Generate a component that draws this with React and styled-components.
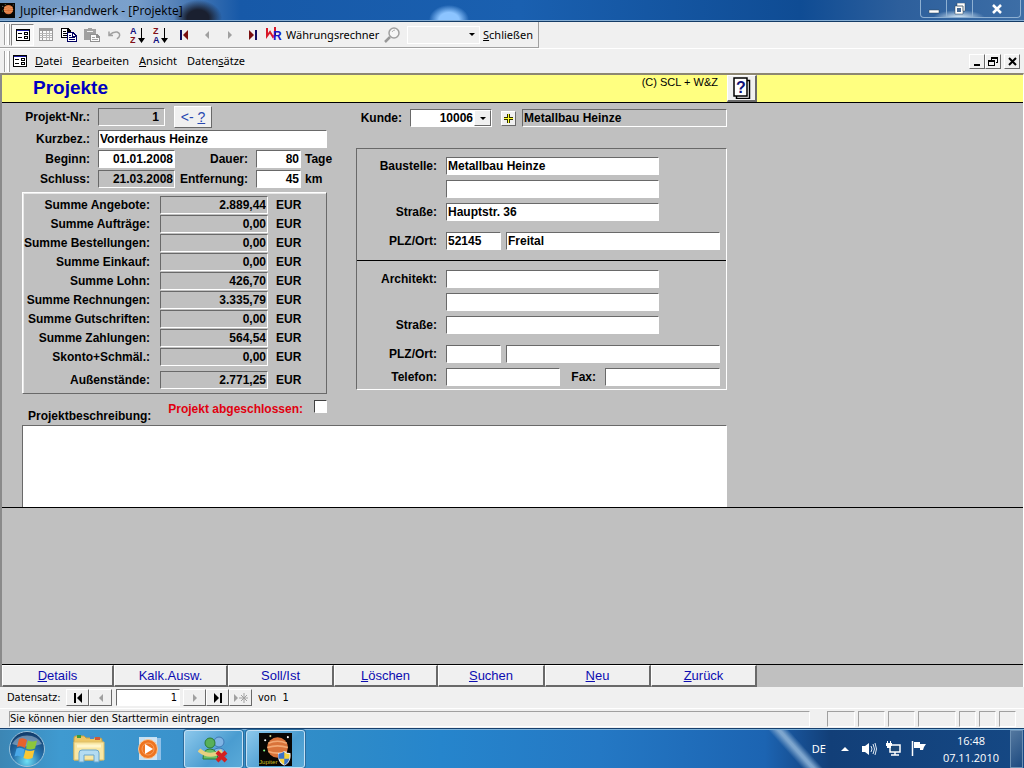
import styled, { createGlobalStyle, css } from 'styled-components'
import { useState } from 'react'

const SUMS = [
  ['Summe Angebote:', '2.889,44'],
  ['Summe Aufträge:', '0,00'],
  ['Summe Bestellungen:', '0,00'],
  ['Summe Einkauf:', '0,00'],
  ['Summe Lohn:', '426,70'],
  ['Summe Rechnungen:', '3.335,79'],
  ['Summe Gutschriften:', '0,00'],
  ['Summe Zahlungen:', '564,54'],
  ['Skonto+Schmäl.:', '0,00'],
  ['Außenstände:', '2.771,25'],
]

const ACTIONS = [
  ['D', 'etails'],
  ['', 'Kalk.Ausw.'],
  ['', 'Soll/Ist'],
  ['L', 'öschen'],
  ['S', 'uchen'],
  ['N', 'eu'],
  ['Z', 'urück'],
]

const STATUS_CELLS = [28, 27, 27, 38, 17, 17, 17]

/* ---------- icons ---------- */

const JupiterIcon = ({ size, label }) => (
  <svg width={size} height={size} viewBox="0 0 32 32">
    <rect width="32" height="32" fill="#080604" />
    <circle cx="18" cy="14" r="10" fill="#d9733a" />
    <path d="M9 10q9-4 18 0M8 14q10-3 20 0M9 18q9 3 18 0" stroke="#f2a873" strokeWidth="1.500" fill="none" />
    <circle cx="6" cy="7" r="1" fill="#fff" />
    <circle cx="5" cy="17" r="1" fill="#8f8" />
    <circle cx="28" cy="4" r="1" fill="#fff" />
    <circle cx="11" cy="3" r="1" fill="#cc8" />
    {label && (
      <>
        <text x="0" y="30" fontSize="6" fontFamily="Liberation Sans" fill="#c8c020">Jupiter</text>
        <path d="M19 20q3 0 5.500-2q2.500 2 5.500 2q1 8-5.500 11q-6.500-3-5.500-11z" fill="#f5d33c" stroke="#e8eef5" />
        <path d="M24.500 18v7h-5.500q-.5-2.500 0-5q3 0 5.500-2zM24.500 25h5q-1 4-5 6z" fill="#3b73c8" />
      </>
    )}
  </svg>
)

const FormIcon = () => (
  <svg width="14" height="12" viewBox="0 0 14 12" shapeRendering="crispEdges">
    <rect width="14" height="12" fill="#000" />
    <rect x="1" y="1" width="12" height="1" fill="#1a1aa0" />
    <rect x="1" y="2" width="12" height="9" fill="#fff" />
    <path d="M2 4h4v1H2zM2 8h4v1H2zM8 3h4v3H8zM8 7h4v3H8z" fill="#000" />
    <path d="M9 4h2v1H9zM9 8h2v1H9z" fill="#fff" />
  </svg>
)

const SheetIcon = () => (
  <svg width="14" height="13" viewBox="0 0 14 13" shapeRendering="crispEdges">
    <rect x="0" y="0" width="14" height="13" fill="#9a9a9a" />
    <path d="M1 3h2v9H1zM4 3h9v9H4z" fill="#fafafa" />
    <path d="M1 5h12v1H1zM1 7h12v1H1zM1 9h12v1H1zM7 3h1v9H7zM10 3h1v9h-1z" fill="#b8b8b8" />
  </svg>
)

const CopyIcon = () => (
  <svg width="16" height="14" viewBox="0 0 16 14" shapeRendering="crispEdges">
    <path d="M0 0h7l3 3v7H0z" fill="#000" />
    <path d="M1 1h5v3h3v5H1z" fill="#fff" />
    <path d="M2 3h3v1H2zM2 5h4v1H2zM2 7h4v1H2z" fill="#000" />
    <path d="M6 4h6l4 4v6H6z" fill="#000060" />
    <path d="M7 5h4v4h4v4H7zM12 6h1v1h1v1h-2z" fill="#fff" />
    <path d="M8 7h2v1H8zM8 9h6v1H8zM8 11h6v1H8z" fill="#000060" />
  </svg>
)

const PasteIcon = () => (
  <svg width="16" height="14" viewBox="0 0 16 14" shapeRendering="crispEdges">
    <path d="M0 1h4V0h4v1h4v11H0z" fill="#a0a0a0" />
    <path d="M3 3h6v1H3z" fill="#f0f0f0" />
    <path d="M6 6h7l3 3v5H6z" fill="#909090" />
    <path d="M7 7h5v3h3v3H7z" fill="#fafafa" />
    <path d="M8 9h3v1H8zM8 11h6v1H8z" fill="#a0a0a0" />
  </svg>
)

const UndoIcon = () => (
  <svg width="13" height="10" viewBox="0 0 13 10">
    <path d="M1 1.500v4h4M1.500 5Q5 1.500 9 2q4 1.500 2 5l-2 2" fill="none" stroke="#a0a0a0" strokeWidth="1.500" />
  </svg>
)

const SortIcon = ({ top, bottom, topColor, bottomColor }) => (
  <svg width="16" height="18" viewBox="0 0 16 18">
    <text x="0" y="8" fontSize="9" fontWeight="700" fontFamily="Liberation Sans" fill={topColor}>{top}</text>
    <text x="0" y="17" fontSize="9" fontWeight="700" fontFamily="Liberation Sans" fill={bottomColor}>{bottom}</text>
    <path d="M11 2h1v10h3l-3.500 5L8 12h3z" fill="#000" />
  </svg>
)

// dir: -1 points left, 1 points right
const StepIcon = ({ dir = 1, bar, star, fill, barFill }) => (
  <svg width="14" height="10" viewBox="0 0 14 10" style={{ transform: `scaleX(${dir})` }}>
    <path d={star ? 'M0 1v8l4-4z' : bar ? 'M3 0v10l5-5z' : 'M5 1v8l4-4z'} fill={fill} />
    {bar && <rect x="9" y="0" width="2" height="10" fill={barFill || fill} />}
    {star && <path d="M10 0v10M5 5h9M7 2l6 6M13 2l-6 6" stroke={fill} />}
  </svg>
)

const CurrencyIcon = () => (
  <svg width="18" height="17" viewBox="0 0 18 17">
    <path d="M1 2v8l3-4 3 5 2-2V1" fill="none" stroke="#d81828" strokeWidth="2" />
    <text x="7" y="14" fontSize="12" fontWeight="700" fontFamily="Liberation Sans" fill="#1414c8">R</text>
  </svg>
)

const LoupeIcon = () => (
  <svg width="17" height="16" viewBox="0 0 17 16">
    <circle cx="10" cy="6" r="5" fill="#f6f6f6" stroke="#a0a0a0" strokeWidth="1.500" />
    <path d="M6 10l-5 5" stroke="#989898" strokeWidth="2.500" />
    <path d="M8 5q1-2 3-2" stroke="#b0b0b0" fill="none" />
  </svg>
)

const HelpIcon = () => (
  <svg width="18" height="22" viewBox="0 0 18 22">
    <path d="M3.500 3.500h13v18h-13z" fill="#fff" stroke="#000" strokeWidth="1.500" />
    <path d="M1 1h13v18H1z" fill="#fff" stroke="#000" strokeWidth="1.500" />
    <text x="3" y="16" fontSize="16" fontWeight="700" fontFamily="Liberation Sans" fill="#101078">?</text>
  </svg>
)

const PlusIcon = () => (
  <svg width="11" height="11" viewBox="0 0 11 11" shapeRendering="crispEdges">
    <path d="M4 1h3v9H4zM1 4h9v3H1z" fill="#ffff30" />
    <path d="M4 1h1v4H1V4h3zM6 1h1v3h3v1H6zM1 6h4v4H4V7H1zM6 6h4v1H7v3H6z" fill="#303000" />
  </svg>
)

const MinIcon = () => <svg width="9" height="9"><path d="M1 7h6v2H1z" fill="#000" /></svg>
const RestoreIcon = () => (
  <svg width="10" height="9" viewBox="0 0 10 9" shapeRendering="crispEdges">
    <path d="M3 0h7v6H8V5h1V2H4v1H3zM0 3h7v6H0zM1 5v3h5V5z" fill="#000" fillRule="evenodd" />
  </svg>
)
const CloseIcon = () => <svg width="9" height="9"><path d="M1 1l7 7M8 1L1 8" stroke="#000" strokeWidth="2" /></svg>

const WhiteMin = () => <svg width="12" height="12"><path d="M1 7h10v3H1z" fill="#fff" stroke="#345" strokeWidth=".5" /></svg>
const WhiteRestore = () => (
  <svg width="12" height="12" viewBox="0 0 12 12">
    <path d="M3 0h8v8H9v3H1V3h2z" fill="#fff" stroke="#345" strokeWidth=".5" />
    <path d="M3 5h4v4H3z" fill="#456a96" />
    <path d="M3 3h6v5" fill="none" stroke="#567" />
  </svg>
)
const WhiteClose = () => <svg width="12" height="12"><path d="M2 2l8 8M10 2l-8 8" stroke="#fff" strokeWidth="2.500" /></svg>

const StartOrb = () => (
  <svg width="38" height="38" viewBox="0 0 38 38">
    <defs>
      <radialGradient id="orb" cx=".5" cy=".85" r=".8">
        <stop offset="0" stopColor="#6fe0f5" />
        <stop offset=".5" stopColor="#2672ad" />
        <stop offset="1" stopColor="#123d6c" />
      </radialGradient>
    </defs>
    <circle cx="19" cy="19" r="17.500" fill="url(#orb)" stroke="#9cc4dc" />
    <path d="M4 14a16 13 0 0 1 30 0q-15 5-30 0z" fill="#fff" opacity=".35" />
    <path d="M11 9q4-2 8 1l-2 8q-4-3-8-1z" fill="#e8622c" />
    <path d="M20 10.500q4 2 9 0l-2 8q-5 2-9 0z" fill="#8cc63c" />
    <path d="M8.500 18.500q4-2 8 1l-2 8q-4-3-8-1z" fill="#4aa8e8" />
    <path d="M17.500 20q4 2 9 0l-2 8q-5 2-9 0z" fill="#fbc834" />
  </svg>
)

const ExplorerIcon = () => (
  <svg width="32" height="30" viewBox="0 0 32 30">
    <path d="M1 4q0-2 2-2h8l2 2h14q2 0 2 2v20H1z" fill="#ecc766" stroke="#c9a040" />
    <path d="M4 1h4v3H4z" fill="#3a9a3a" /><path d="M17 2h4v3h-4z" fill="#4a8ad0" /><path d="M22 3h5v3h-5z" fill="#d05a3a" />
    <path d="M1 8h30v18H1z" fill="#f9e7a4" stroke="#dfbf66" />
    <path d="M4 12h24" stroke="#fff6cc" strokeWidth="3" />
    <path d="M6 28V19q0-3 3-3h14q3 0 3 3v9h-5v-7H11v7z" fill="#b4dcf2" stroke="#6aa6cc" />
  </svg>
)

const PlayerIcon = () => (
  <svg width="26" height="26" viewBox="0 0 26 26">
    <path d="M8 2h16v22H8z" fill="#8fc0e8" /><path d="M2 1h18v23H2z" fill="#d5e8f6" opacity=".9" />
    <circle cx="11" cy="13" r="9.500" fill="#ee7420" stroke="#f8c898" />
    <circle cx="11" cy="13" r="6" fill="none" stroke="#f8a060" />
    <path d="M8 8v10l8-5z" fill="#fff" />
  </svg>
)

const MessengerIcon = () => (
  <svg width="32" height="28" viewBox="0 0 32 28">
    <circle cx="21" cy="7" r="5" fill="#7fb4e4" stroke="#3f78b4" />
    <path d="M14 22q0-9 7-9t7 9z" fill="#7fb4e4" stroke="#3f78b4" />
    <circle cx="12" cy="8" r="5" fill="#58b058" stroke="#2c7c34" />
    <path d="M5 24q0-10 7-10t8 10z" fill="#6cc068" stroke="#2c7c34" />
    <path d="M1 15q10 9 23 1" fill="none" stroke="#e8d080" strokeWidth="4" />
    <path d="M19 17l9 9M28 17l-9 9" stroke="#d42020" strokeWidth="4" />
  </svg>
)

const SpeakerIcon = () => (
  <svg width="16" height="14" viewBox="0 0 16 14">
    <path d="M1 4h3l4-3v12l-4-3H1z" fill="#fff" />
    <path d="M10 4q2 3 0 6M12 2q3 5 0 10M14 1q3 6 0 12" fill="none" stroke="#e0eaf4" />
  </svg>
)
const NetworkIcon = () => (
  <svg width="16" height="15" viewBox="0 0 16 15">
    <path d="M4 4h10v7H4z" fill="#1b4675" stroke="#fff" strokeWidth="1.500" />
    <path d="M9 11v3M5 14h8" stroke="#fff" strokeWidth="1.500" />
    <path d="M0 2h6v3H5v2H1V5H0zM1 0h1v2H1zM4 0h1v2H4z" fill="#fff" />
  </svg>
)
const FlagIcon = () => (
  <svg width="15" height="15" viewBox="0 0 15 15">
    <path d="M1.500 0v15" stroke="#fff" strokeWidth="1.500" />
    <path d="M3 1h6v2h6l-2 3-1 3H9V7H3z" fill="#fff" />
  </svg>
)

/* ---------- page ---------- */

const Field = ({ label, id, value = '', ...rest }) => {
  const [text, setText] = useState(value)
  return (
    <>
      {label && <Label htmlFor={id} $w={rest.$label}>{label}</Label>}
      <TextBox id={id} value={text} onChange={(e) => setText(e.target.value)} {...rest} />
    </>
  )
}

export default function App() {
  return (
    <Window>
      <GlobalStyle />
      <TitleBar>
        <JupiterIcon size={15} />
        <span>Jupiter-Handwerk - [Projekte]</span>
        <Caption>
          <button aria-label="Minimieren"><WhiteMin /></button>
          <button aria-label="Wiederherstellen"><WhiteRestore /></button>
          <button aria-label="Schließen"><WhiteClose /></button>
        </Caption>
      </TitleBar>

      <Toolbar>
        <Grip />
        <ToolButton $on aria-label="Formularansicht"><FormIcon /></ToolButton>
        <ToolButton aria-label="Datenblatt"><SheetIcon /></ToolButton>
        <ToolButton aria-label="Kopieren"><CopyIcon /></ToolButton>
        <ToolButton aria-label="Einfügen"><PasteIcon /></ToolButton>
        <ToolButton aria-label="Rückgängig"><UndoIcon /></ToolButton>
        <ToolButton aria-label="Aufsteigend"><SortIcon top="A" bottom="Z" topColor="#101080" bottomColor="#801018" /></ToolButton>
        <ToolButton aria-label="Absteigend"><SortIcon top="Z" bottom="A" topColor="#801018" bottomColor="#101080" /></ToolButton>
        <ToolButton aria-label="Erster"><StepIcon dir={-1} bar fill="#7a1010" barFill="#101060" /></ToolButton>
        <ToolButton aria-label="Voriger"><StepIcon dir={-1} fill="#a0a0a0" /></ToolButton>
        <ToolButton aria-label="Nächster"><StepIcon fill="#a0a0a0" /></ToolButton>
        <ToolButton aria-label="Letzter"><StepIcon bar fill="#7a1010" barFill="#101060" /></ToolButton>
        <TextButton><CurrencyIcon />Währungsrechner</TextButton>
        <ToolButton aria-label="Zoom"><LoupeIcon /></ToolButton>
        <ZoomBox>
          <select aria-label="Zoomfaktor"><option /></select>
          <Arrow />
        </ZoomBox>
        <TextButton $last><span><u>S</u>chließen</span></TextButton>
      </Toolbar>

      <MenuBar>
        <Grip />
        <FormIcon />
        <MenuItem><u>D</u>atei</MenuItem>
        <MenuItem><u>B</u>earbeiten</MenuItem>
        <MenuItem><u>A</u>nsicht</MenuItem>
        <MenuItem>Daten<u>s</u>ätze</MenuItem>
        <MdiButtons>
          <MdiButton aria-label="Minimieren"><MinIcon /></MdiButton>
          <MdiButton aria-label="Wiederherstellen"><RestoreIcon /></MdiButton>
          <MdiButton $apart aria-label="Schließen"><CloseIcon /></MdiButton>
        </MdiButtons>
      </MenuBar>

      <Form>
        <Header>
          <h1>Projekte</h1>
          <small>(C) SCL + W&amp;Z</small>
          <HelpButton aria-label="Hilfe"><HelpIcon /></HelpButton>
        </Header>

        <Body>
          <Columns>
            <div>
              <Rows>
                <Row $h={22}>
                  <Field label="Projekt-Nr.:" id="nr" value="1" $label={68} $w={67} $right $grey $inset={5} readOnly />
                  <SearchButton>&lt;- <u>?</u></SearchButton>
                </Row>
                <Row>
                  <Field label="Kurzbez.:" id="kurz" value="Vorderhaus Heinze" $label={68} $w={229} />
                </Row>
                <Row>
                  <Field label="Beginn:" id="beginn" value="01.01.2008" $label={68} $w={77} $right />
                  <Field label="Dauer:" id="dauer" value="80" $label={73} $w={45} $right />
                  <Unit>Tage</Unit>
                </Row>
                <Row>
                  <Field label="Schluss:" id="schluss" value="21.03.2008" $label={68} $w={77} $right $grey />
                  <Field label="Entfernung:" id="entf" value="45" $label={73} $w={45} $right />
                  <Unit>km</Unit>
                </Row>
              </Rows>
              <SumPanel>
                {SUMS.map(([label, value], i) => (
                  <SumRow key={label} $last={i === SUMS.length - 1}>
                    <Field label={label} id={`sum${i}`} value={value} $label={127} $w={108} $right $grey readOnly />
                    <Unit>EUR</Unit>
                  </SumRow>
                ))}
              </SumPanel>
            </div>

            <div>
              <Row $h={24}>
                <Label htmlFor="kunde" $w={46}>Kunde:</Label>
                <CustomerBox>
                  <select id="kunde" defaultValue="10006"><option>10006</option></select>
                  <DropButton><Arrow /></DropButton>
                </CustomerBox>
                <AddButton aria-label="Neuer Kunde"><PlusIcon /></AddButton>
                <TextBox aria-label="Kundenname" value="Metallbau Heinze" readOnly $grey $fill />
              </Row>
              <AddressPanel>
                <Section>
                  <Row><Field label="Baustelle:" id="bau" value="Metallbau Heinze" $label={80} $w={213} /></Row>
                  <Row $indent><Field id="bau2" aria-label="Baustelle Zusatz" $w={213} /></Row>
                  <Row><Field label="Straße:" id="str" value="Hauptstr. 36" $label={80} $w={213} /></Row>
                  <Row $top={6}>
                    <Field label="PLZ/Ort:" id="plz" value="52145" $label={80} $w={55} />
                    <Field id="ort" aria-label="Ort" value="Freital" $w={214} $near />
                  </Row>
                </Section>
                <Section>
                  <Row><Field label="Architekt:" id="arch" $label={80} $w={213} /></Row>
                  <Row $indent><Field id="arch2" aria-label="Architekt Zusatz" $w={213} /></Row>
                  <Row><Field label="Straße:" id="astr" $label={80} $w={213} /></Row>
                  <Row $top={6}>
                    <Field label="PLZ/Ort:" id="aplz" $label={80} $w={55} />
                    <Field id="aort" aria-label="Ort Architekt" $w={214} $near />
                  </Row>
                  <Row>
                    <Field label="Telefon:" id="tel" $label={80} $w={114} />
                    <Field label="Fax:" id="fax" $label={36} $w={115} />
                  </Row>
                </Section>
              </AddressPanel>
            </div>
          </Columns>

          <DoneRow>
            <label htmlFor="text">Projektbeschreibung:</label>
            <DoneLabel htmlFor="done">Projekt abgeschlossen:</DoneLabel>
            <Check id="done" type="checkbox" />
          </DoneRow>
          <Description id="text" />
        </Body>

        <Empty />

        <Footer>
          {ACTIONS.map(([key, rest]) => (
            <Action key={rest}>{key && <u>{key}</u>}{rest}</Action>
          ))}
        </Footer>
      </Form>

      <Navigator>
        <label htmlFor="record">Datensatz:</label>
        <NavButton aria-label="Erster"><StepIcon dir={-1} bar fill="#000" /></NavButton>
        <NavButton aria-label="Voriger"><StepIcon dir={-1} fill="#a0a0a0" /></NavButton>
        <RecordBox id="record" defaultValue="1" />
        <NavButton aria-label="Nächster"><StepIcon fill="#a0a0a0" /></NavButton>
        <NavButton aria-label="Letzter"><StepIcon bar fill="#000" /></NavButton>
        <NavButton aria-label="Neu"><StepIcon star fill="#a0a0a0" /></NavButton>
        <span>von&nbsp; 1</span>
      </Navigator>

      <StatusBar>
        <StatusText>Sie können hier den Starttermin eintragen</StatusText>
        {STATUS_CELLS.map((w, i) => <StatusCell key={i} $w={w} />)}
      </StatusBar>

      <Taskbar>
        <Launcher aria-label="Start" $w={54}><StartOrb /></Launcher>
        <Launcher aria-label="Explorer" $w={70}><ExplorerIcon /></Launcher>
        <Launcher aria-label="Media Player" $w={51}><PlayerIcon /></Launcher>
        <Task aria-label="Messenger"><MessengerIcon /></Task>
        <Task aria-label="Jupiter-Handwerk"><JupiterIcon size={33} label /></Task>
        <Tray>
          <span>DE</span>
          <svg width="8" height="5"><path d="M0 5l4-4 4 4z" fill="#fff" /></svg>
          <SpeakerIcon />
          <NetworkIcon />
          <FlagIcon />
          <Clock>16:48<br />07.11.2010</Clock>
          <ShowDesktop aria-label="Desktop anzeigen" />
        </Tray>
      </Taskbar>
    </Window>
  )
}

const GlobalStyle = createGlobalStyle`
  * { box-sizing: border-box; }
  body {
    margin: 0;
    background: #f0f0f0;
    color: #000;
  }
  button, input, select, textarea {
    font: inherit;
    color: inherit;
    margin: 0;
    padding: 0;
    border: 0;
    border-radius: 0;
    outline: 0;
  }
  button { background: none; }
  svg { display: block; flex: none; }
`

const raised = css`
  border: 1px solid;
  border-color: #fff #696969 #696969 #fff;
  background: #f0f0f0;
`

const Window = styled.div`
  display: flex;
  flex-direction: column;
  min-height: 100vh;
  font: 11px/16px 'Noto Sans', 'Open Sans', sans-serif;
`

const TitleBar = styled.div`
  display: flex;
  align-items: center;
  height: 22px;
  gap: 5px;
  border-bottom: 1px solid #143c66;
  box-shadow: inset 0 -1px #86aed4;
  font: 12px/16px 'Open Sans', sans-serif;
  background:
    radial-gradient(ellipse 20px 15px at 449px 20px, #8cc4ff 0 50%, transparent 100%),
    radial-gradient(ellipse 24px 18px at 198px 18px, #1a2030 0 45%, transparent 100%),
    radial-gradient(ellipse 60px 16px at 70px 22px, #b8cdf0, transparent),
    linear-gradient(90deg, #6d94c0 0, #7ba1cc 130px, #5682b8 175px, #1759a8 240px, #1a60b0 520px, #0f4c94 800px, #2d5f9c 900px, #3d6ea6 100%);
`

const Caption = styled.div`
  display: flex;
  align-self: flex-start;
  margin: 0 3px 0 auto;
  height: 18px;
  border: 1px solid #8eb0d2;
  border-top: 0;
  border-radius: 0 0 4px 4px;
  background: radial-gradient(ellipse 26px 8px at 38px 18px, #e8f6ff, transparent);
  button {
    display: flex;
    align-items: center;
    justify-content: center;
    width: 26px;
    border-right: 1px solid #8eb0d2;
  }
  button:last-child {
    width: 47px;
    border: 0;
  }
`

const Toolbar = styled.div`
  display: flex;
  align-items: center;
  align-self: flex-start;
  width: 539px;
  height: 26px;
  border: 1px solid #a0a0a0;
  border-width: 0 1px 1px 0;
`

const Grip = styled.span`
  width: 6px;
  height: 21px;
  margin: 0 1px 0 4px;
  flex: none;
  border: solid #a0a0a0;
  border-width: 0 1px;
  box-shadow: inset 1px 0 #fff, inset -2px 0 #fff;
`

const ToolButton = styled.button`
  display: flex;
  align-items: center;
  justify-content: center;
  flex: none;
  width: 23px;
  height: 22px;
  ${({ $on }) => $on && css`
    background: #f8f8f8;
    border: 1px solid;
    border-color: #808080 #fff #fff #808080;
  `}
`

const TextButton = styled.button`
  display: flex;
  align-items: center;
  gap: 2px;
  padding: 0 ${({ $last }) => ($last ? 5 : 2)}px 0 2px;
  white-space: nowrap;
`

const Arrow = styled.span`
  width: 0;
  border: solid transparent;
  border-width: 3px 3px 0;
  border-top-color: #000;
`

const ZoomBox = styled.span`
  position: relative;
  display: flex;
  flex: 1;
  height: 18px;
  margin: 0 1px 0 3px;
  border: 1px solid #fff;
  select {
    flex: 1;
    appearance: none;
    background: #f0f0f0;
  }
  ${Arrow} {
    position: absolute;
    right: 4px;
    top: 6px;
    pointer-events: none;
  }
`

const MenuBar = styled.div`
  display: flex;
  align-items: center;
  height: 25px;
  border-top: 1px solid #fff;
  ${Grip} { margin-right: 3px; }
`

const MenuItem = styled.button`
  margin-left: 8px;
  & + & { margin-left: 10px; }
`

const MdiButtons = styled.div`
  display: flex;
  margin: 0 4px 0 auto;
`

const MdiButton = styled.button`
  display: flex;
  align-items: center;
  justify-content: center;
  width: 16px;
  height: 15px;
  margin-left: ${({ $apart }) => ($apart ? 3 : 0)}px;
  ${raised}
`

const Form = styled.main`
  display: flex;
  flex-direction: column;
  flex: 1;
  border: solid;
  border-width: 2px 1px 0 2px;
  border-color: #8c8672 #fff #fff #8a8a8a;
  background: #c0c0c0;
`

const Header = styled.header`
  display: grid;
  grid-template-columns: minmax(0, 716px) 39px;
  grid-template-areas: 'title help';
  align-items: start;
  height: 28px;
  background: #ffff80;
  border-bottom: 1px solid #000;
  h1 {
    grid-area: title;
    margin: 0 0 0 31px;
    font: 700 19px/25px 'Liberation Sans', sans-serif;
    color: #0000c0;
  }
  small {
    grid-area: title;
    justify-self: end;
    font: 11px/14px 'Liberation Sans', sans-serif;
  }
`

const HelpButton = styled.button`
  grid-area: help;
  justify-self: end;
  display: flex;
  align-items: center;
  justify-content: center;
  width: 30px;
  height: 27px;
  ${raised}
  border-width: 1px 2px 2px 1px;
`

const Body = styled.div`
  padding: 3px 0 0 20px;
  border-bottom: 1px solid #000;
  font: 700 12px/14px 'Liberation Sans', sans-serif;
`

const Columns = styled.div`
  display: grid;
  grid-template-columns: 313px 371px;
  gap: 21px;
`

const Row = styled.div`
  display: flex;
  align-items: center;
  height: ${({ $h = 18 }) => $h}px;
  margin-top: ${({ $top = 0 }) => $top}px;
  padding-left: ${({ $indent }) => ($indent ? 80 : 0)}px;
`

const Label = styled.label`
  width: ${({ $w }) => $w}px;
  flex: none;
  text-align: right;
  white-space: nowrap;
`

const TextBox = styled.input`
  flex: ${({ $fill }) => ($fill ? '1' : 'none')};
  width: ${({ $w = 0 }) => $w}px;
  min-width: 0;
  height: 18px;
  margin-left: ${({ $near, $fill }) => ($near ? 5 : $fill ? 6 : 9)}px;
  padding: 0 ${({ $inset = 1 }) => $inset}px;
  border: 1px solid;
  border-color: #696969 #fff #fff #696969;
  text-align: ${({ $right }) => ($right ? 'right' : 'left')};
  background: ${({ $grey }) => ($grey ? '#c0c0c0' : '#fff')};
`

const Unit = styled.span`
  margin-left: 4px;
`

const Rows = styled.div`
  display: flex;
  flex-direction: column;
  gap: 2px;
  margin-bottom: 4px;
  ${TextBox} { margin-left: 8px; }
`

const SearchButton = styled.button`
  width: 38px;
  height: 22px;
  margin-left: 9px;
  font-size: 14px;
  font-weight: 400;
  color: #2848b0;
  ${raised}
`

const SumPanel = styled.div`
  display: flex;
  flex-direction: column;
  gap: 1px;
  width: 305px;
  padding: 3px 0 4px;
  border: 1px solid;
  border-color: #fff #696969 #696969 #fff;
  box-shadow: inset 1px 1px #e8e8e8;
`

const SumRow = styled(Row)`
  margin-top: ${({ $last }) => ($last ? 4 : 0)}px;
  ${TextBox} { margin-left: 10px; }
  ${Unit} { margin-left: 8px; }
`

const CustomerBox = styled.span`
  position: relative;
  display: flex;
  width: 82px;
  height: 18px;
  margin: 0 9px 0 8px;
  border: 1px solid;
  border-color: #696969 #fff #fff #696969;
  select {
    width: 100%;
    padding-right: 18px;
    appearance: none;
    background: #fff;
    text-align-last: right;
  }
`

const DropButton = styled.span`
  position: absolute;
  top: 0;
  right: 0;
  bottom: 0;
  display: flex;
  align-items: center;
  justify-content: center;
  width: 17px;
  pointer-events: none;
  ${raised}
`

const AddButton = styled.button`
  display: flex;
  align-items: center;
  justify-content: center;
  width: 15px;
  height: 15px;
  ${raised}
`

const AddressPanel = styled.div`
  margin-top: 18px;
  border: 1px solid;
  border-color: #696969 #fff #fff #696969;
`

const Section = styled.div`
  display: flex;
  flex-direction: column;
  gap: 5px;
  padding: 8px 0 10px;
  & + & {
    padding: 9px 0 3px;
    border-top: 1px solid #000;
  }
`

const DoneRow = styled.div`
  display: flex;
  align-items: flex-start;
  width: 305px;
  height: 31px;
  padding: 6px 0 0 6px;
  label:first-child { margin-top: 9px; }
`

const DoneLabel = styled.label`
  margin: 2px 11px 0 auto;
  color: #e00010;
`

const Check = styled.input`
  appearance: none;
  width: 13px;
  height: 13px;
  background: #fff;
  border: 1px solid;
  border-color: #404040 #fff #fff #404040;
  &:checked { background: radial-gradient(#000 40%, #fff 45%); }
`

const Description = styled.textarea`
  display: block;
  width: 705px;
  height: 82px;
  padding: 2px;
  border: solid;
  border-width: 1px 1px 0 1px;
  border-color: #696969 #fff #fff #696969;
  background: #fff;
  resize: none;
`

const Empty = styled.div`
  flex: 1;
  border-bottom: 1px solid #000;
`

const Footer = styled.footer`
  display: grid;
  grid-template-columns: 112px 114px 106px 104px 107px 106px 106px;
  height: 22px;
`

const Action = styled.button`
  font: 13px/18px 'Liberation Sans', sans-serif;
  color: #0c0cb0;
  ${raised}
  border-width: 1px 2px 2px 1px;
`

const Navigator = styled.div`
  display: flex;
  align-items: center;
  height: 21px;
  padding-left: 7px;
  font: 11px/14px 'DejaVu Sans Condensed', 'DejaVu Sans', sans-serif;
  label { width: 59px; }
  span { margin-left: 6px; }
`

const NavButton = styled.button`
  display: flex;
  align-items: center;
  justify-content: center;
  width: 23px;
  height: 17px;
  ${raised}
`

const RecordBox = styled.input`
  width: 64px;
  height: 17px;
  margin: 0 3px 0 4px;
  padding-right: 2px;
  text-align: right;
  background: #fff;
  border: 1px solid;
  border-color: #696969 #fff #fff #696969;
`

const StatusBar = styled.div`
  display: flex;
  align-items: center;
  gap: 3px;
  height: 20px;
  padding: 0 8px 0 9px;
  border-top: 1px solid #fff;
  font: 11px/14px 'DejaVu Sans Condensed', 'DejaVu Sans', sans-serif;
`

const StatusText = styled.div`
  flex: 1;
  height: 16px;
  margin-right: 14px;
  border: 1px solid;
  border-color: #a0a0a0 #fff #fff #a0a0a0;
`

const StatusCell = styled.div`
  width: ${({ $w }) => $w}px;
  height: 16px;
  border: 1px solid;
  border-color: #a0a0a0 #fff #fff #a0a0a0;
`

const Taskbar = styled.div`
  display: flex;
  align-items: center;
  height: 40px;
  border-top: 1px solid #17406e;
  box-shadow: inset 0 1px #7fb4dc;
  background:
    linear-gradient(48deg, transparent 0 38%, #7ea6ce 48% 51%, transparent 60%) 766px 0 / 60px 100% no-repeat,
    linear-gradient(90deg, #3c86b4 0, #3f9ad0 60px, #3a92cc 180px, #2f8cc8 330px, #2685cc 440px, #2478c4 600px, #1c64b2 765px, #174f92 800px, #123f78 830px, #154884 100%);
`

const Launcher = styled.button`
  display: flex;
  align-items: center;
  justify-content: center;
  flex: none;
  width: ${({ $w }) => $w}px;
  height: 38px;
`

const Task = styled.button`
  display: flex;
  align-items: center;
  justify-content: center;
  width: 59px;
  height: 38px;
  margin: 1px 0 0 3px;
  border: 1px solid #c4e0f4;
  border-radius: 3px;
  background: linear-gradient(135deg, #8cc8ec, #4a9cd0 60%, #5aaad8);
  box-shadow: 0 0 0 1px #2c6c9c;
  ${Launcher} + & { margin-left: 9px; }
`

const Tray = styled.div`
  display: flex;
  align-items: center;
  gap: 9px;
  height: 100%;
  margin-left: auto;
  color: #fff;
  svg:first-of-type { margin: 0 3px 0 6px; }
`

const Clock = styled.time`
  margin: 0 2px 0 8px;
  text-align: center;
  font: 11px/17px 'Open Sans', sans-serif;
`

const ShowDesktop = styled.button`
  width: 13px;
  height: 38px;
  margin: 1px 1px 0 0;
  border: 1px solid #6c90b4;
  background: linear-gradient(135deg, #54789f, #1d4a80);
`
